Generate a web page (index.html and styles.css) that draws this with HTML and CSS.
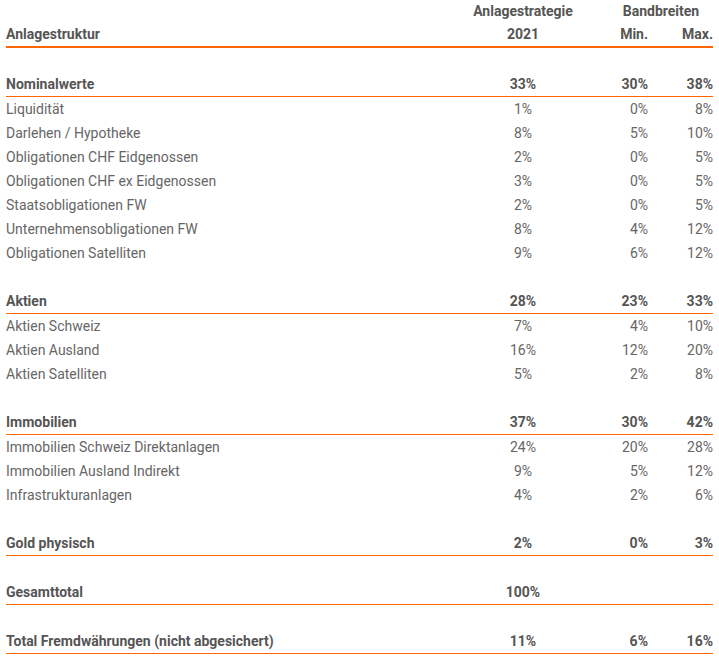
FILE: index.html
```html
<!DOCTYPE html>
<html lang="de">
<head>
<meta charset="utf-8">
<link rel="stylesheet" href="styles.css">
</head>
<body>
<table class="alloc">
  <colgroup>
    <col class="c-label"><col class="c-strat"><col class="c-min"><col class="c-max">
  </colgroup>
  <thead>
    <tr class="h1">
      <th></th>
      <th class="ctr">Anlagestrategie</th>
      <th class="ctr" colspan="2">Bandbreiten</th>
    </tr>
    <tr class="h2">
      <th class="lft">Anlagestruktur</th>
      <th class="ctr">2021</th>
      <th class="rgt">Min.</th>
      <th class="rgt">Max.</th>
    </tr>
  </thead>
  <tbody>
    <tr class="gap"><td colspan="4"></td></tr>
    <tr class="grp"><td>Nominalwerte</td><td class="ctr">33%</td><td class="rgt">30%</td><td class="rgt">38%</td></tr>
    <tr><td>Liquidität</td><td class="ctr">1%</td><td class="rgt">0%</td><td class="rgt">8%</td></tr>
    <tr><td>Darlehen / Hypotheke</td><td class="ctr">8%</td><td class="rgt">5%</td><td class="rgt">10%</td></tr>
    <tr><td>Obligationen CHF Eidgenossen</td><td class="ctr">2%</td><td class="rgt">0%</td><td class="rgt">5%</td></tr>
    <tr><td>Obligationen CHF ex Eidgenossen</td><td class="ctr">3%</td><td class="rgt">0%</td><td class="rgt">5%</td></tr>
    <tr><td>Staatsobligationen FW</td><td class="ctr">2%</td><td class="rgt">0%</td><td class="rgt">5%</td></tr>
    <tr><td>Unternehmensobligationen FW</td><td class="ctr">8%</td><td class="rgt">4%</td><td class="rgt">12%</td></tr>
    <tr><td>Obligationen Satelliten</td><td class="ctr">9%</td><td class="rgt">6%</td><td class="rgt">12%</td></tr>
    <tr class="gap"><td colspan="4"></td></tr>
    <tr class="grp"><td>Aktien</td><td class="ctr">28%</td><td class="rgt">23%</td><td class="rgt">33%</td></tr>
    <tr><td>Aktien Schweiz</td><td class="ctr">7%</td><td class="rgt">4%</td><td class="rgt">10%</td></tr>
    <tr><td>Aktien Ausland</td><td class="ctr">16%</td><td class="rgt">12%</td><td class="rgt">20%</td></tr>
    <tr><td>Aktien Satelliten</td><td class="ctr">5%</td><td class="rgt">2%</td><td class="rgt">8%</td></tr>
    <tr class="gap"><td colspan="4"></td></tr>
    <tr class="grp"><td>Immobilien</td><td class="ctr">37%</td><td class="rgt">30%</td><td class="rgt">42%</td></tr>
    <tr><td>Immobilien Schweiz Direktanlagen</td><td class="ctr">24%</td><td class="rgt">20%</td><td class="rgt">28%</td></tr>
    <tr><td>Immobilien Ausland Indirekt</td><td class="ctr">9%</td><td class="rgt">5%</td><td class="rgt">12%</td></tr>
    <tr><td>Infrastrukturanlagen</td><td class="ctr">4%</td><td class="rgt">2%</td><td class="rgt">6%</td></tr>
    <tr class="gap"><td colspan="4"></td></tr>
    <tr class="grp"><td>Gold physisch</td><td class="ctr">2%</td><td class="rgt">0%</td><td class="rgt">3%</td></tr>
    <tr class="gap"><td colspan="4"></td></tr>
    <tr class="grp"><td>Gesamttotal</td><td class="ctr">100%</td><td class="rgt"></td><td class="rgt"></td></tr>
    <tr class="gap"><td colspan="4"></td></tr>
    <tr class="grp"><td>Total Fremdwährungen (nicht abgesichert)</td><td class="ctr">11%</td><td class="rgt">6%</td><td class="rgt">16%</td></tr>
  </tbody>
</table>
</body>
</html>
```

FILE: styles.css
```css
html, body {
  margin: 0;
  padding: 0;
  background: #ffffff;
}
body {
  padding: 0 6px;
  font-family: Roboto, "Liberation Sans", Arial, sans-serif;
  font-size: 14px;
  color: #666666;
}
.alloc {
  width: 707px;
  border-collapse: collapse;
  table-layout: fixed;
}
.c-label { width: 431px; }
.c-strat { width: 172px; }
.c-min { width: 39px; }
.c-max { width: 65px; }
.alloc th, .alloc td {
  height: 24px;
  padding: 0;
  line-height: 24px;
  white-space: nowrap;
  vertical-align: middle;
}
.alloc th {
  font-weight: 700;
  color: #555555;
}
.h1 th { height: 22px; line-height: 22px; }
.h2 th { border-bottom: 2px solid #ff6600; }
.lft { text-align: left; }
.ctr { text-align: center; }
.rgt { text-align: right; }
.grp td {
  font-weight: 700;
  color: #555555;
  border-bottom: 1px solid #ff6600;
}
.gap td { height: 24px; }
```
